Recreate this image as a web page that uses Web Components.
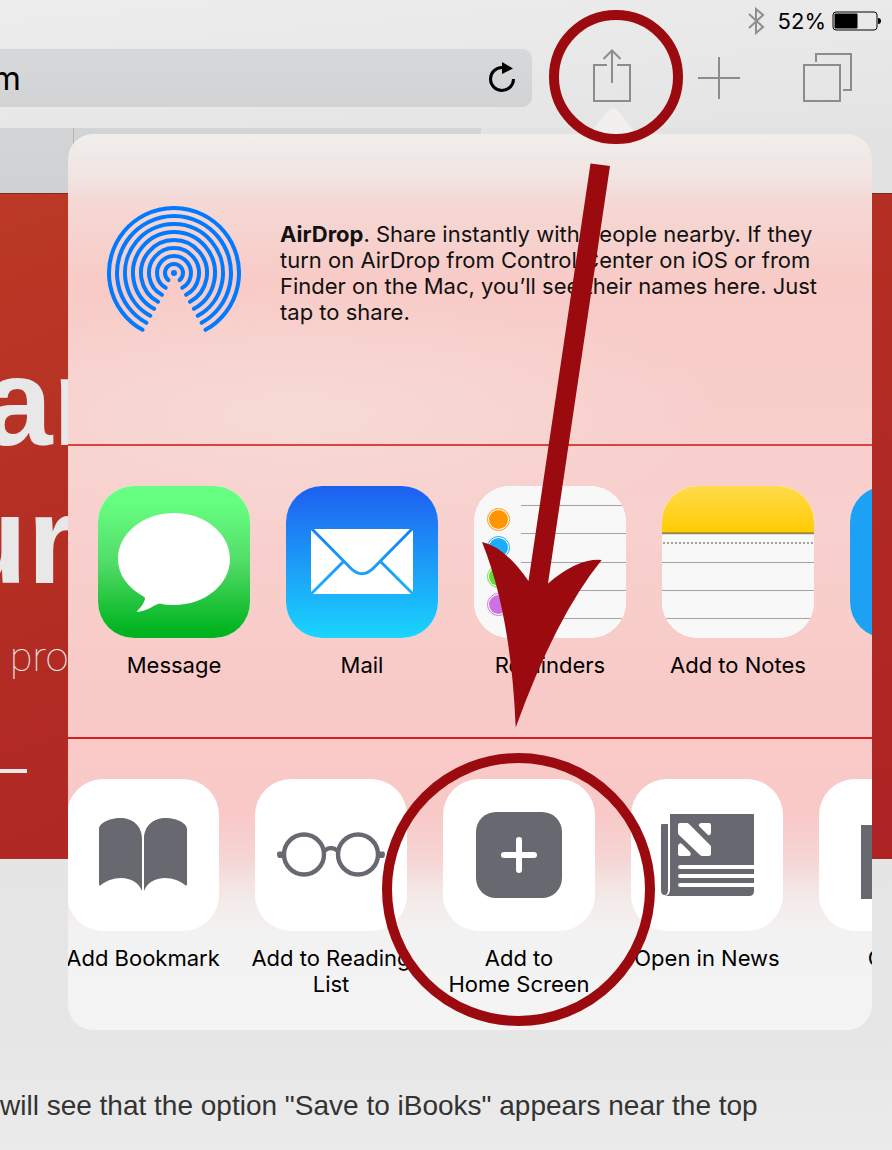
<!DOCTYPE html>
<html lang="en">
<head>
<meta charset="utf-8">
<meta name="viewport" content="width=device-width, initial-scale=1">
<title>Add to Home Screen</title>
<style>
  html, body { margin: 0; min-height: 100%; }
  body {
    background: #e6e6e6;
    font-family: Inter, "Open Sans", "Liberation Sans", sans-serif;
    color: #000;
  }
</style>
</head>
<body>
<tablet-screen>
  <browser-chrome slot="page"></browser-chrome>
  <hero-banner slot="page">
    <span slot="first">an</span>
    <span slot="second">ur</span>
    <span slot="lead">pro</span>
  </hero-banner>
  <article-text slot="page">will see that the option "Save to iBooks" appears near the top</article-text>
  <share-sheet slot="sheet">
    <airdrop-panel slot="airdrop"><b>AirDrop</b>. Share instantly with people nearby. If they turn on AirDrop from Control Center on iOS or from Finder on the Mac, you’ll see their names here. Just tap to share.</airdrop-panel>
    <share-item slot="apps" icon="message">Message</share-item>
    <share-item slot="apps" icon="mail">Mail</share-item>
    <share-item slot="apps" icon="reminders">Reminders</share-item>
    <share-item slot="apps" icon="notes">Add to Notes</share-item>
    <share-item slot="apps" icon="social" name="Post"></share-item>
    <share-item slot="actions" icon="bookmark">Add Bookmark</share-item>
    <share-item slot="actions" icon="glasses">Add to Reading List</share-item>
    <share-item slot="actions" icon="home">Add to<br>Home Screen</share-item>
    <share-item slot="actions" icon="news">Open in News</share-item>
    <share-item slot="actions" icon="copy">Copy</share-item>
  </share-sheet>
  <callout-marks slot="marks"></callout-marks>
</tablet-screen>

<script>
const define = (name, html, setup) => {
  const template = document.createElement('template');
  template.innerHTML = html;
  customElements.define(name, class extends HTMLElement {
    constructor() {
      super();
      this.attachShadow({ mode: 'open' }).append(template.content.cloneNode(true));
    }
    connectedCallback() {
      if (setup) setup(this, this.shadowRoot);
    }
  });
};

/* Icon artwork, all on a 152 unit square */
const lines = (x, ys) => ys.map(y => `<path d="M${x} ${y}H152" stroke="#a3a3a5"/>`).join('');
const bullet = (y, c) => `<circle cx="24.500" cy="${y}" r="11" fill="#fff" stroke="${c}"/><circle cx="24.500" cy="${y}" r="9.500" fill="${c}"/>`;
const ICONS = {
  message: `<defs><linearGradient id="g" x2="0" y2="1"><stop stop-color="#67ff81"/><stop offset=".1" stop-color="#67ff81"/><stop offset=".5" stop-color="#52dc69"/><stop offset=".95" stop-color="#01b41f"/></linearGradient></defs>
    <rect width="152" height="152" fill="url(#g)"/>
    <path fill="#fff" d="M76 27C107 27 132 47.500 132 73S107 119 76 119C70 119 66 118.500 62 117.500C56 118.500 52 124 40 126C38.500 126 39 125 40 124C43 121.500 46 117 47 113C47 111.500 46.500 111 45.500 110.500C30 102 20 89 20 73C20 47.500 45 27 76 27Z"/>`,
  mail: `<defs><linearGradient id="g" x2="0" y2="1"><stop stop-color="#1e5ff0"/><stop offset="1" stop-color="#1ad5fe"/></linearGradient>
    <mask id="m"><rect x="25" y="43" width="102" height="65" fill="#fff"/><path d="M25 42L64 81.500Q76 94 88 81.500L127 42M25 108L57 76M127 108L95 76" fill="none" stroke="#000" stroke-width="3"/></mask></defs>
    <rect width="152" height="152" fill="url(#g)"/><rect x="25" y="43" width="102" height="65" fill="#fff" mask="url(#m)"/>`,
  reminders: `<rect width="152" height="152" fill="#f8f8f8"/>${lines(47, [19.5, 47.5, 76.5, 104.5, 132.5])}
    ${bullet(33.5, '#ff9500')}${bullet(61.5, '#1badf8')}${bullet(90.5, '#63da38')}${bullet(118.5, '#cc73e1')}`,
  notes: `<defs><linearGradient id="g" x2="0" y2="1"><stop stop-color="#ffdb4c"/><stop offset="1" stop-color="#ffcb00"/></linearGradient></defs>
    <rect width="152" height="152" fill="#f8f8f8"/><rect width="152" height="47" fill="url(#g)"/>
    <path d="M0 46.500H152" stroke="#c09c12"/><path d="M0 47.500H152" stroke="#8a8468"/><path d="M0 48.500H152" stroke="#dedede"/>
    <path d="M1 57H152" stroke="#a3a3a5" stroke-width="2" stroke-dasharray="2 2"/>${lines(0, [76.5, 104.5, 132.5])}`,
  social: `<rect width="152" height="152" fill="#1da1f4"/>`,
  bookmark: `<g fill="#686870"><path id="p" d="M32 50C32 44 43 39 53 39C66 39 75 47 75 60V112C72 104 64 99 54 99C46 99 39 102 34 106Q32 107.500 32 105Z"/><use href="#p" transform="matrix(-1 0 0 1 152 0)"/></g>`,
  glasses: `<g fill="none" stroke="#686870" stroke-width="4.400"><circle cx="49" cy="75.500" r="20"/><circle cx="103" cy="75.500" r="20"/><path d="M69 72Q76 66 83 72"/></g><path fill="#686870" d="M28 72.500H24Q22 72.500 22 75.500T24 79H28ZM124 72.500H128Q130 72.500 130 75.500T128 79H124Z"/>`,
  home: `<rect x="33" y="33" width="86" height="86" rx="20" fill="#686870"/><path d="M76 61V91M61 76H91" stroke="#fff" stroke-width="6" stroke-linecap="round"/>`,
  news: `<path fill="#686870" d="M39 35H122Q123 35 123 36V112Q123 117 118 117H34Q39 116 39 111ZM31 45H37V111Q37 116 33.500 116T30 111V46Q30 45 31 45Z"/>
    <g fill="#fff"><path d="M49 44H56Q57 44 58 45L79 66Q80 67 80 68V75Q80 77 78 77H71Q70 77 69 76L48 56Q47 55 47 54V46Q47 44 49 44ZM70 44H78Q80 44 80 46V54Q79 57 77 56L68 47Q67 45 70 44ZM47 67Q48 63 51 65L59 73Q61 76 58 77H49Q47 77 47 75Z"/></g>
    <path d="M49 88H123M49 97H123M49 106H123" stroke="#fff" stroke-width="4"/><path d="M49 88H50M49 97H50M49 106H50" stroke="#fff" stroke-width="4" stroke-linecap="round"/>`,
  copy: `<rect x="42" y="46" width="56" height="74" fill="#686870"/>`
};

define('tablet-screen', `
  <style>
    :host { display: flex; flex-direction: column; position: relative; min-height: 100vh; overflow: hidden; }
    main { display: flex; flex-direction: column; flex: 1; }
  </style>
  <main><slot name="page"></slot></main>
  <slot name="sheet"></slot>
  <slot name="marks"></slot>
`);

define('browser-chrome', `
  <style>
    :host { display: block; background: linear-gradient(175deg, #ededed, #e1e1e1); }
    svg { display: block; fill: none; }
    .status { display: flex; justify-content: flex-end; align-items: center; gap: 6px; height: 42px; padding-right: 10px; font-size: 22px; line-height: 28px; }
    .status .bt { margin-right: 7px; }
    .toolbar { display: flex; align-items: center; gap: 26px; padding: 7px 10px 21px 0; }
    .field { display: flex; align-items: center; flex: 1; min-width: 0; height: 58px; margin-left: -16px; padding-right: 15px; box-sizing: border-box; border-radius: 10px; background: linear-gradient(#d7d8da, #d2d3d5); }
    input { flex: 1; min-width: 0; padding: 0 8px; border: 0; outline: 0; background: none; color: #000; font: 33px/40px Inter, sans-serif; }
    button { display: flex; justify-content: center; padding: 0; border: 0; background: none; color: inherit; font: inherit; }
    .actions { display: grid; grid-template-columns: repeat(3, 108px); }
    .tabs { display: grid; grid-template-columns: 73px 1fr 410px; column-gap: 1px; height: 65px; border-bottom: 1px solid #7a2a1d; background: linear-gradient(90deg, #b4b5b7 50%, transparent 50%); }
    .tabs button { background: linear-gradient(#d3d4d6, #cfd2d3); }
    .tabs i { background: #e2e2e2; }
  </style>
  <div class="status">
    <svg class="bt" width="18" height="28" stroke="#8e8e8e" stroke-width="2"><path d="M2 7L16 20L9 26V2L16 8L2 21"/></svg>
    <span>52%</span>
    <svg width="50" height="20"><rect x="1" y="1" width="44" height="18" rx="3" stroke="#000"/><rect x="2.500" y="2.500" width="23" height="15" rx="1" fill="#000"/><path d="M46 7Q49 7 49 10T46 13Z" fill="#000"/></svg>
  </div>
  <div class="toolbar">
    <div class="field">
      <input type="text" value="m" aria-label="Address">
      <button aria-label="Reload"><svg width="30" height="36"><path d="M26.500 19A11.500 11.500 0 1 1 15 7.500H18" stroke="#000" stroke-width="3"/><path d="M15 2L26 8.500L15 14Z" fill="#000"/></svg></button>
    </div>
    <div class="actions">
      <button aria-label="Share"><svg width="60" height="58" stroke="#8c8c8c" stroke-width="2"><path d="M25 16H12V52H48V16H35M30 34V2M21.500 10L30 1.500L38.500 10"/></svg></button>
      <button aria-label="New tab"><svg width="60" height="58" stroke="#8c8c8c" stroke-width="2"><path d="M8 29H50M29 8V50"/></svg></button>
      <button aria-label="Show tabs"><svg width="60" height="58" stroke="#8c8c8c" stroke-width="2"><path d="M6 16H42V52H6ZM18 13V5H53V41H45"/></svg></button>
    </div>
  </div>
  <div class="tabs"><button aria-label="First tab"></button><button aria-label="Second tab"></button><i></i></div>
`);

define('hero-banner', `
  <style>
    :host { display: block; padding: 139px 0 86px; overflow: hidden; background: linear-gradient(160deg, #bb3926, #b22b23 50%, #ae2324); color: #e8e8e8; }
    h1 { margin: 0; font: bold 125px/138px "Liberation Sans", sans-serif; white-space: nowrap; }
    h1 div { margin-left: -17px; }
    h1 div + div { margin-left: -49px; }
    p { margin: 24px 0 0 10px; font: 100 41px/48px Roboto, sans-serif; }
    hr { width: 27px; height: 4px; margin: 88px 0 0; border: 0; background: #e8e8e8; }
  </style>
  <h1><div><slot name="first"></slot></div><div><slot name="second"></slot></div></h1>
  <p><slot name="lead"></slot></p>
  <hr>
`);

define('article-text', `
  <style>
    :host { display: block; flex: 1; padding: 229px 0 0; background: linear-gradient(#e5e5e5, #e6e6e6 60%, #ebebeb); }
    p { margin: 0; font: 28px/36px "Liberation Sans", sans-serif; color: #333; white-space: nowrap; }
  </style>
  <p><slot></slot></p>
`);

define('share-sheet', `
  <style>
    :host { display: block; position: absolute; top: 134px; left: 68px; right: 20px; }
    .tip { position: absolute; left: 517px; bottom: 100%; display: block; }
    .panel {
      overflow: hidden; border-radius: 25px;
      background:
        radial-gradient(ellipse 420px 130px at 230px 280px, #f6ddd9cc, #f6ddd900),
        linear-gradient(#f0eeec 0, #f1e3e1 45px, #f5d8d4 70px, #f8cbc7 145px, #f8cecb 260px, #f8d0cd 400px, #f8cac7 560px, #f9c9c8 680px, #f5d6d4 725px, #f3ebe9 765px, #f3f2f2 800px, #f4f4f4 896px);
    }
    section { display: flex; box-sizing: border-box; min-height: 293px; padding: 40px 0 0 12px; border-top: 2px solid #d91f1d; }
    .apps { border-color: #d9443c; }
    .actions { padding-left: 0; }
    .actions::before { content: ""; flex: none; margin-left: -19px; }
  </style>
  <svg class="tip" width="56" height="26"><path d="M0 26C8 26 14 12 22 4Q28 -3 34 4C42 12 48 26 56 26Z" fill="#f1f0ef"/></svg>
  <div class="panel">
    <slot name="airdrop"></slot>
    <section class="apps"><slot name="apps"></slot></section>
    <section class="actions"><slot name="actions"></slot></section>
  </div>
`);

define('airdrop-panel', `
  <style>
    :host { display: grid; grid-template-columns: 134px 1fr; column-gap: 39px; align-items: start; box-sizing: border-box; min-height: 310px; padding: 72px 40px 0 39px; }
    svg { display: block; fill: none; stroke: #007aff; stroke-width: 4; stroke-linecap: round; }
    p { margin: 15px 0 0; font-size: 22px; line-height: 26px; color: #111; }
  </style>
  <svg width="134" height="134" viewBox="-67 -67 134 134" role="img" aria-label="AirDrop"></svg>
  <p><slot></slot></p>
`, (host, root) => {
  const arcs = [9, 17, 25, 33, 41, 49, 57, 65].map(r => {
    const a = (r < 12 ? 38 : 29) * Math.PI / 180;
    const x = (r * Math.sin(a)).toFixed(2), y = (r * Math.cos(a)).toFixed(2);
    return `<path d="M-${x} ${y}A${r} ${r} 0 1 1 ${x} ${y}"/>`;
  });
  root.querySelector('svg').innerHTML = arcs.join('') + '<circle r="3" fill="#007aff" stroke="none"/>';
});

define('share-item', `
  <style>
    :host { display: block; flex: none; width: 188px; }
    button { display: flex; flex-direction: column; align-items: center; gap: 14px; width: 100%; padding: 0 12px; border: 0; background: none; color: #000; font: inherit; font-size: 22px; line-height: 26px; text-align: center; }
    svg { display: block; width: 152px; height: 152px; border-radius: 36px; background: #fff; }
  </style>
  <button><svg viewBox="0 0 152 152" aria-hidden="true"></svg><span><slot></slot></span></button>
`, (host, root) => {
  root.querySelector('svg').innerHTML = ICONS[host.getAttribute('icon')];
  if (host.hasAttribute('name')) root.querySelector('button').setAttribute('aria-label', host.getAttribute('name'));
});

define('callout-marks', `
  <style>
    :host { display: block; position: absolute; top: 0; left: 0; pointer-events: none; }
    svg { display: block; fill: none; stroke: #9b0a0f; stroke-width: 10; }
    .arrow { fill: #9b0a0f; stroke: none; }
  </style>
  <svg width="700" height="1040" aria-hidden="true">
    <circle cx="616" cy="77" r="62"/>
    <circle cx="518.500" cy="889.500" r="131.500"/>
    <path class="arrow" d="M590.500 163.500L610 166L548 583.500Q578 558 601.700 560Q556 616 515.700 727.500Q511 614 482 542Q505 547 528.500 581Z"/>
  </svg>
`);
</script>
</body>
</html>
